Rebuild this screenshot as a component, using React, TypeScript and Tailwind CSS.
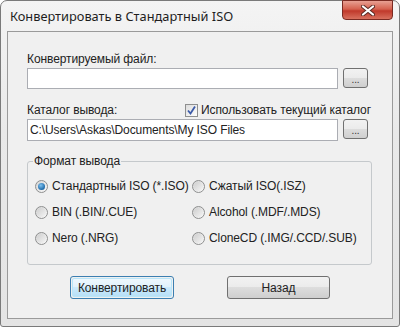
import React from "react";

const Radio = ({ checked, label }: { checked?: boolean; label: string }) => (
  <div className="flex items-center h-[16px]">
    <div className="w-[13px] h-[13px] rounded-full border border-[#8e8f8f] bg-gradient-to-br from-[#d4d4d4] to-[#fbfbfb] flex items-center justify-center">
      {checked ? (
        <div className="w-[7px] h-[7px] rounded-full bg-[radial-gradient(circle_at_40%_35%,#7fc2f0,#1f6aa8_70%,#154d80)]" />
      ) : (
        <div className="w-[9px] h-[9px] rounded-full bg-gradient-to-br from-[#cfcfcf] to-[#f4f4f4]" />
      )}
    </div>
    <span className="ml-[4px] whitespace-nowrap">{label}</span>
  </div>
);

const Browse = () => (
  <div className="w-[25px] h-[20px] ml-[5px] rounded-[3px] border border-[#707070] bg-[linear-gradient(#f2f2f2,#ebebeb_50%,#dddddd_50%,#cfcfcf)] flex items-center justify-center text-[10px] leading-none pt-[3px] text-[#333]">
    ...
  </div>
);

export default function App() {
  return (
    <div
      className="w-[400px] h-[327px] bg-white text-[#222]"
      style={{ fontFamily: '"Liberation Sans", Arial, sans-serif' }}
    >
      <div className="w-[400px] h-[327px] flex flex-col rounded-t-[7px] rounded-b-[3px] border border-[#7a7a7a] bg-[linear-gradient(#f4f4f4,#e9e9e9_40%,#e4e4e4)]">
        {/* title bar */}
        <div className="h-[30px] flex items-start">
          <div
            className="mt-[6px] ml-[9px] text-[12.8px] leading-[18px] text-[#1e1e1e]"
            style={{ fontFamily: '"Noto Sans", "Open Sans", sans-serif' }}
          >
            Конвертировать в Стандартный ISO
          </div>
          <div className="ml-auto mr-[6px] mt-[-1px] w-[51px] h-[20px] rounded-b-[4px] border border-[#7a2a22] bg-[linear-gradient(#e8a093,#d5614f_45%,#c0392b_55%,#d8705e)] flex items-center justify-center">
            <svg width="14" height="11" viewBox="0 0 14 11">
              <path d="M2 1.5 L12 9.5 M12 1.5 L2 9.5" stroke="#5a2a24" strokeWidth="4" strokeLinecap="round" />
              <path d="M2 1.5 L12 9.5 M12 1.5 L2 9.5" stroke="#ffffff" strokeWidth="2.2" strokeLinecap="round" />
            </svg>
          </div>
        </div>
        {/* client area */}
        <div className="mx-[6px] mb-[7px] flex-1 border border-[#9a9a9a] bg-[#f0f0f0] flex flex-col px-[19px] text-[12px] leading-[14px] tracking-[-0.1px]">
          <div className="mt-[20px] h-[14px]">Конвертируемый файл:</div>
          <div className="mt-[2px] flex items-start">
            <div className="w-[311px] h-[21px] border border-[#abadb3] bg-white" />
            <Browse />
          </div>
          <div className="mt-[14px] flex items-center h-[14px]">
            <div className="w-[158px]">Каталог вывода:</div>
            <div className="w-[13px] h-[13px] border border-[#8e8f8f] bg-gradient-to-br from-[#dcdcdc] to-[#fdfdfd] flex items-center justify-center">
              <svg width="11" height="11" viewBox="0 0 11 11">
                <path d="M2 5.5 L4.5 8.5 L9 1.5" stroke="#3b5aa8" strokeWidth="1.8" fill="none" />
              </svg>
            </div>
            <span className="ml-[3px] whitespace-nowrap">Использовать текущий каталог</span>
          </div>
          <div className="mt-[2px] flex items-start">
            <div className="w-[311px] h-[22px] border border-[#abadb3] bg-white flex items-center pl-[2px] whitespace-nowrap">
              C:\Users\Askas\Documents\My ISO Files
            </div>
            <Browse />
          </div>
          <fieldset className="mt-[13px] w-[345px] h-[111px] border border-[#c5c9cc] rounded-[3px] pl-[7px]">
            <legend className="px-[1px] ml-[-2px]">Формат вывода</legend>
            <div className="grid grid-cols-[157px_1fr] gap-y-[10px] mt-[10px]">
              <Radio checked label="Стандартный ISO (*.ISO)" />
              <Radio label="Сжатый ISO(.ISZ)" />
              <Radio label="BIN (.BIN/.CUE)" />
              <Radio label="Alcohol (.MDF/.MDS)" />
              <Radio label="Nero (.NRG)" />
              <Radio label="CloneCD (.IMG/.CCD/.SUB)" />
            </div>
          </fieldset>
          <div className="mt-[11px] flex">
            <div className="ml-[43px] w-[104px] h-[23px] rounded-[3px] border border-[#3c7fb1] p-[1px]">
              <div className="w-full h-full rounded-[2px] border border-[#b9e6f9] bg-[linear-gradient(#eef7fd,#e0f2fc_50%,#cbeafc_50%,#b8e0f7)] flex items-center justify-center">
                Конвертировать
              </div>
            </div>
            <div className="ml-[53px] w-[103px] h-[23px] rounded-[3px] border border-[#707070] bg-[linear-gradient(#f2f2f2,#ebebeb_50%,#dddddd_50%,#cfcfcf)] flex items-center justify-center">
              Назад
            </div>
          </div>
        </div>
      </div>
    </div>
  );
}
